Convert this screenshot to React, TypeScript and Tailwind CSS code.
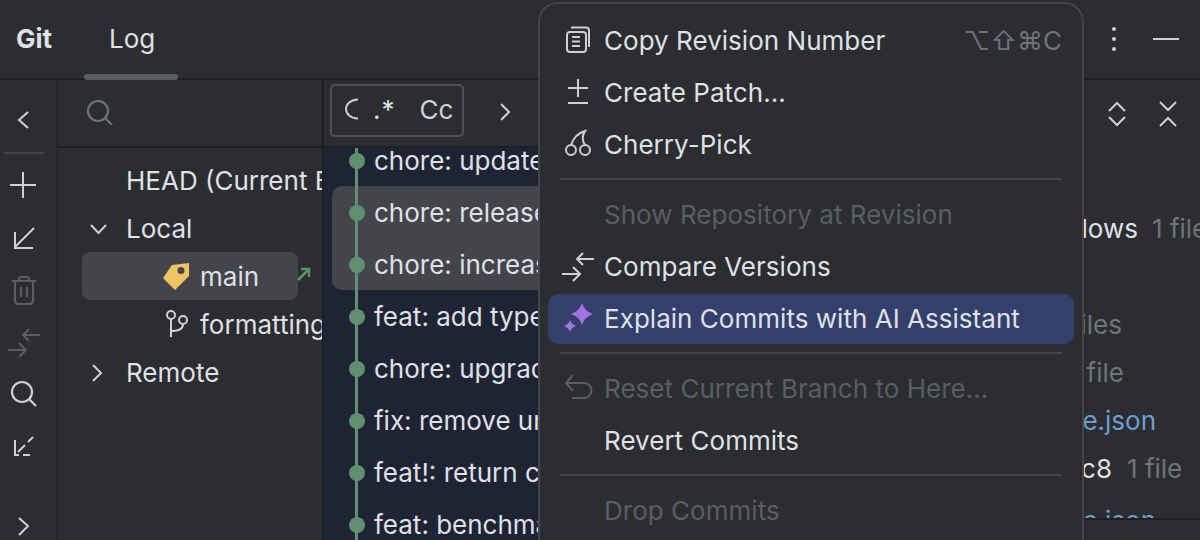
import React from "react";

const ICON = "#ced0d6";
const MUTED = "#5a5d63";

type IconProps = { color?: string };

// sidebar icons, 32x32 box
const Plus = () => (
  <svg width="32" height="32" fill="none" stroke={ICON} strokeWidth="2"><path d="M2 16H28M15 3V29" /></svg>
);
const ArrowIn = () => (
  <svg width="32" height="32" fill="none" stroke={ICON} strokeWidth="2"><path d="M26 5L7 24M7 9V25H25" /></svg>
);
const Trash = () => (
  <svg width="32" height="32" fill="none" stroke={MUTED} strokeWidth="2.2">
    <path d="M4 7H28M11 7V5Q11 3 13 3H19Q21 3 21 5V7M7 7V26Q7 30 11 30H21Q25 30 25 26V7M13 13V23M19 13V23" />
  </svg>
);
const Compare = ({ color = ICON }: IconProps) => (
  <svg width="36" height="32" fill="none" stroke={color} strokeWidth="2">
    <path d="M34 8H17M23 2L17 8L23 14M2 23H20M13 16L20 23L13 30" />
  </svg>
);
const Search = ({ color = ICON }: IconProps) => (
  <svg width="32" height="32" fill="none" stroke={color} strokeWidth="2.2">
    <circle cx="14" cy="14" r="10" />
    <path d="M21 21L28 28" />
  </svg>
);
const DashArrow = () => (
  <svg width="32" height="32" fill="none" stroke={ICON} strokeWidth="2">
    <path d="M25 7L20 12M17 15L10 22M7 10V25H11M15 25H22" />
  </svg>
);
const Chevron = ({ d, color = ICON }: { d: string; color?: string }) => (
  <svg width="32" height="32" fill="none" stroke={color} strokeWidth="2"><path d={d} /></svg>
);

// context menu icons
const CopyIcon = () => (
  <svg width="36" height="32" fill="none" stroke={ICON} strokeWidth="2">
    <rect x="7" y="7" width="19" height="20" rx="3" />
    <path d="M11 2.5H26Q29 2.5 29 5.5V22M12 12H20M12 16.5H20M12 21H20" />
  </svg>
);
const PatchIcon = () => (
  <svg width="36" height="32" fill="none" stroke={ICON} strokeWidth="2">
    <path d="M18 2V20M8 11H28M8 26H28" />
  </svg>
);
const CherryIcon = () => (
  <svg width="36" height="32" fill="none" stroke={ICON} strokeWidth="2">
    <circle cx="11" cy="21" r="5" />
    <circle cx="25" cy="21" r="5" />
    <path d="M11 16C13 10 18 4 25 2C22 7 22 12 25 16" />
  </svg>
);
const SparkIcon = () => (
  <svg width="36" height="32" fill="#a571e6">
    <path d="M22 0Q24.500 8.500 33 11Q24.500 13.500 22 22Q19.500 13.500 11 11Q19.500 8.500 22 0Z" />
    <path d="M10 17Q11.500 21.500 16 23Q11.500 24.500 10 29Q8.500 24.500 4 23Q8.500 21.500 10 17Z" />
  </svg>
);
const ResetIcon = () => (
  <svg width="36" height="32" fill="none" stroke={MUTED} strokeWidth="2">
    <path d="M13 2L6 10L13 18M6 10H24A7.5 7.5 0 0 1 24 25H12" />
  </svg>
);

const Item = ({
  label,
  icon,
  hint,
  disabled,
  active,
}: {
  label: string;
  icon?: React.ReactNode;
  hint?: string;
  disabled?: boolean;
  active?: boolean;
}) => (
  <div className={`h-[52px] mx-[8px] flex items-center ${active ? "py-[1px]" : ""}`}>
    <div className={`flex-1 h-full flex items-center pl-[12px] pr-[12px] rounded-[10px] ${active ? "bg-[#33406b]" : ""}`}>
      <div className="w-[44px] h-[32px] shrink-0">{icon}</div>
      <span className={`tracking-[0.03px] ${disabled ? "text-[#5a5d63]" : "text-[#dfe1e5]"}`}>{label}</span>
      {hint && <span className="ml-auto text-[#6f737a]">{hint}</span>}
    </div>
  </div>
);

const Sep = () => (
  <div className="h-[18px] pt-[7px] px-[20px]">
    <div className="h-[2px] w-full bg-[#43454a]" />
  </div>
);

const TreeRow = ({ children }: { children: React.ReactNode }) => (
  <div className="h-[48px] flex items-center relative whitespace-nowrap">{children}</div>
);

const commits = [
  "chore: update dependencies",
  "chore: release v2.0.0",
  "chore: increase coverage",
  "feat: add type exports",
  "chore: upgrade eslint",
  "fix: remove unused code",
  "feat!: return correct type",
  "feat: benchmark tests",
];

const Commit = ({ text }: { text: string }) => (
  <div className="flex-1 h-[52px] flex items-center pl-[17px] whitespace-nowrap">
    <span className="relative w-[16px] h-[16px] rounded-full bg-[#5f8f70] shrink-0">
      <span className="absolute left-[6px] top-[-18px] w-[3px] h-[52px] bg-[#5f8f70]" />
    </span>
    <span className="ml-[9px] text-[#dfe1e5]">{text}</span>
  </div>
);

const Row = ({ children }: { children?: React.ReactNode }) => (
  <div className="h-[48px] flex items-center whitespace-nowrap">{children}</div>
);

export default function App() {
  return (
    <div
      className="relative w-[1200px] h-[540px] overflow-hidden bg-[#2b2d30] text-[#dfe1e5] text-[26px] leading-none"
      style={{ fontFamily: "Inter, 'DejaVu Sans', sans-serif" }}
    >
      {/* Tool window header */}
      <header className="h-[80px] flex items-center border-b-2 border-[#1e1f22] pl-[16px] pr-[21px]">
        <span className="font-bold w-[93px]">Git</span>
        <div className="relative h-full flex items-center">
          <span>Log</span>
          <span className="absolute left-[-25px] bottom-[-2px] w-[94px] h-[6px] rounded-[3px] bg-[#5a5d63]" />
        </div>
        <div className="ml-auto flex items-center gap-[37px]">
          <div className="flex flex-col gap-[6px]">
            <span className="w-[4px] h-[4px] rounded-full bg-[#ced0d6]" />
            <span className="w-[4px] h-[4px] rounded-full bg-[#ced0d6]" />
            <span className="w-[4px] h-[4px] rounded-full bg-[#ced0d6]" />
          </div>
          <span className="w-[26px] h-[2px] bg-[#ced0d6]" />
        </div>
      </header>

      <div className="flex h-[460px]">
        {/* Left actions */}
        <aside className="w-[58px] shrink-0 border-r border-[#1e1f22] flex flex-col pl-[8px]">
          <div className="h-[73px] pt-[24px]">
            <Chevron d="M20 8L11 16L20 24" />
          </div>
          <div className="h-[2px] w-[40px] ml-[-4px] bg-[#43454a] mt-[-1px]" />
          <div className="h-[69px] pt-[15px]"><Plus /></div>
          <div className="h-[51px]"><ArrowIn /></div>
          <div className="h-[53px]"><Trash /></div>
          <div className="h-[51px] ml-[-2px]"><Compare color={MUTED} /></div>
          <div className="h-[52px]"><Search /></div>
          <div className="h-[32px]"><DashArrow /></div>
          <div className="mt-auto h-[28px] overflow-hidden">
            <Chevron d="M11 6L20 14L11 23" />
          </div>
        </aside>

        {/* Branch tree */}
        <section className="w-[266px] shrink-0 border-r-2 border-[#1e1f22] overflow-hidden">
          <div className="h-[68px] border-b-2 border-[#1e1f22] flex items-center pl-[26px]">
            <Search color="#6f737a" />
          </div>
          <div className="pt-[9px]">
            <TreeRow><span className="ml-[68px]">HEAD (Current Branch)</span></TreeRow>
            <TreeRow>
              <span className="ml-[24px] w-[44px] h-[32px]"><Chevron d="M9 12L16.500 20L24 12" /></span>
              <span>Local</span>
            </TreeRow>
            <TreeRow>
              <div className="ml-[24px] mb-[2px] w-[216px] h-[48px] rounded-[8px] bg-[#43454a] flex items-center pl-[80px] pt-[2px]">
                <svg width="30" height="30" className="mr-[9px] ml-[-1px] shrink-0" fill="#edc565" fillRule="evenodd">
                  <path d="M28 1L28 14L14 28L2 16L11 3ZM20 5A3.500 3.500 0 1 0 20 12A3.500 3.500 0 1 0 20 5Z" />
                </svg>
                main
              </div>
              <svg width="16" height="16" className="ml-[-2px] mt-[-6px] shrink-0" fill="none" stroke="#57965c" strokeWidth="2.500">
                <path d="M2 14L13 3M5 3H13V11" />
              </svg>
            </TreeRow>
            <TreeRow>
              <svg width="26" height="32" className="ml-[106px] mr-[10px] shrink-0" fill="none" stroke={ICON} strokeWidth="2">
                <circle cx="7" cy="6" r="4" />
                <circle cx="19" cy="11" r="4" />
                <path d="M7 10V28M19 15Q19 22 7 22" />
              </svg>
              <span>formatting</span>
            </TreeRow>
            <TreeRow>
              <span className="ml-[24px] w-[44px] h-[32px]"><Chevron d="M11 8L19 16L11 24" /></span>
              <span>Remote</span>
            </TreeRow>
          </div>
        </section>

        {/* Commit log */}
        <section className="w-[476px] shrink-0 overflow-hidden">
          <div className="h-[68px] border-b-2 border-[#1e1f22] flex items-center pl-[6px]">
            <div className="w-[134px] h-[53px] mt-[-6px] rounded-[5px] border-2 border-[#4e5157] flex items-center pl-[12px]">
              <svg width="20" height="24" fill="none" stroke={ICON} strokeWidth="2" className="shrink-0">
                <path d="M14 1.500A12 9.500 0 0 0 14 20.500" />
              </svg>
              <span className="ml-[9px] text-[26px] tracking-[1px]">.*</span>
              <span className="ml-[24px] text-[#ced0d6]">Cc</span>
            </div>
            <div className="ml-[26px] mt-[-2px]">
              <Chevron d="M11 8L19 16L11 24" />
            </div>
          </div>
          <div className="h-[392px] overflow-hidden bg-[#1e2433]">
            <div className="mt-[-13px]">
              <div className="pl-[8px] flex"><Commit text={commits[0]} /></div>
              <div className="pl-[8px]">
                <div className="h-[104px] mt-[-1px] mb-[1px] pt-[1px] bg-[#43454a] rounded-tl-[10px] rounded-bl-[10px]">
                  <div className="flex"><Commit text={commits[1]} /></div>
                  <div className="flex"><Commit text={commits[2]} /></div>
                </div>
              </div>
              {commits.slice(3).map((c) => (
                <div key={c} className="pl-[8px] flex"><Commit text={c} /></div>
              ))}
            </div>
          </div>
        </section>

        {/* Commit details, mostly behind the menu */}
        <section className="flex-1 flex flex-col overflow-hidden">
          <div className="h-[68px] shrink-0 flex items-center justify-end pr-[16px] gap-[19px]">
            <Chevron d="M8 13L16 5L24 13M8 19L16 27L24 19" />
            <Chevron d="M8 4L16 12L24 4M8 28L16 20L24 28" />
          </div>
          <div className="flex-1 overflow-hidden pt-[9px]">
            <Row />
            <Row>
              <span className="w-[338px] text-right shrink-0">.github/workflows</span>
              <span className="ml-[14px] text-[#6f737a]">1 file</span>
            </Row>
            <Row />
            <Row><span className="w-[322px] text-right text-[#6f737a]">3 files</span></Row>
            <Row><span className="w-[324px] text-right text-[#6f737a]">1 file</span></Row>
            <Row><span className="w-[356px] text-right text-[#6c9fd0]">package.json</span></Row>
            <Row>
              <span className="w-[312px] text-right shrink-0">4a1c8</span>
              <span className="ml-[15px] text-[#6f737a]">1 file</span>
            </Row>
            <div className="pt-[4px]">
              <Row><span className="w-[356px] text-right text-[#6c9fd0]">package.json</span></Row>
            </div>
          </div>
          <div className="h-[22px] shrink-0 border-t-2 border-[#1e1f22] bg-[#2b2d30]" />
        </section>
      </div>

      {/* Context menu */}
      <div className="absolute left-[538px] top-[2px] w-[546px] h-[560px] rounded-[20px] border-2 border-[#43454a] bg-[#2b2d30] pt-[11px]">
        <Item label="Copy Revision Number" icon={<CopyIcon />} hint="⌥⇧⌘C" />
        <Item label="Create Patch..." icon={<PatchIcon />} />
        <Item label="Cherry-Pick" icon={<CherryIcon />} />
        <Sep />
        <Item label="Show Repository at Revision" disabled />
        <Item label="Compare Versions" icon={<Compare />} />
        <Item label="Explain Commits with AI Assistant" icon={<SparkIcon />} active />
        <Sep />
        <Item label="Reset Current Branch to Here..." icon={<ResetIcon />} disabled />
        <Item label="Revert Commits" />
        <Sep />
        <Item label="Drop Commits" disabled />
      </div>
    </div>
  );
}
